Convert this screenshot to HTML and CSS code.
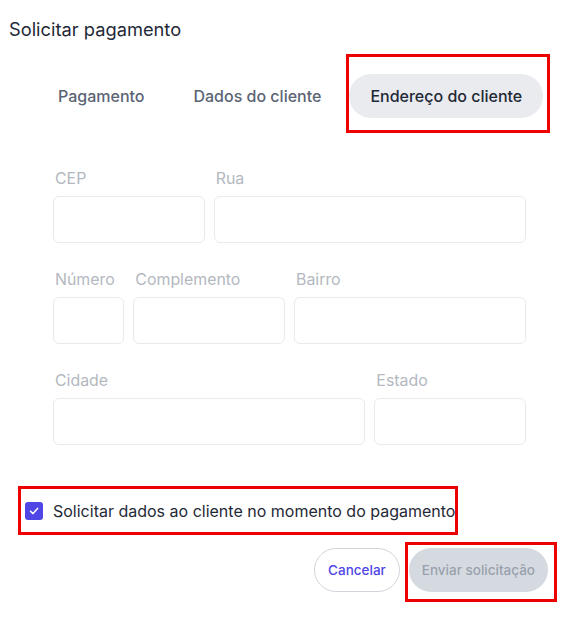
FILE: index.html
```html
<!DOCTYPE html>
<html lang="pt-BR">
<head>
    <meta charset="UTF-8">
    <meta name="viewport" content="width=device-width, initial-scale=1.0">
    <title>Solicitar pagamento</title>
    <link rel="stylesheet" href="styles.css">
</head>
<body>
    <div class="dialog">
        <h1>Solicitar pagamento</h1>

        <div class="tabs">
            <button class="tab">Pagamento</button>
            <button class="tab">Dados do cliente</button>
            <button class="tab active">Endereço do cliente</button>
        </div>

        <form class="address">
            <div class="field span-2">
                <label>CEP</label>
                <input type="text" disabled>
            </div>
            <div class="field span-4">
                <label>Rua</label>
                <input type="text" disabled>
            </div>
            <div class="field span-1">
                <label>Número</label>
                <input type="text" disabled>
            </div>
            <div class="field span-2">
                <label>Complemento</label>
                <input type="text" disabled>
            </div>
            <div class="field span-3">
                <label>Bairro</label>
                <input type="text" disabled>
            </div>
            <div class="field span-4">
                <label>Cidade</label>
                <input type="text" disabled>
            </div>
            <div class="field span-2">
                <label>Estado</label>
                <input type="text" disabled>
            </div>
        </form>

        <label class="ask">
            <span class="box">
                <svg width="12" height="12" viewBox="0 0 12 12"><path d="M2.5 6.2 L5 8.6 L9.6 3.4" fill="none" stroke="#fff" stroke-width="1.5" stroke-linecap="round" stroke-linejoin="round"/></svg>
            </span>
            Solicitar dados ao cliente no momento do pagamento
        </label>

        <div class="actions">
            <button class="btn cancel">Cancelar</button>
            <button class="btn send" disabled>Enviar solicitação</button>
        </div>

        <!-- annotation boxes -->
        <div class="mark mark-tab"></div>
        <div class="mark mark-ask"></div>
        <div class="mark mark-send"></div>
    </div>
</body>
</html>
```

FILE: styles.css
```css
body {
    margin: 0;
    font-family: Inter, "Noto Sans", sans-serif;
    color: #1f2937;
    background: #fff;
}
.dialog {
    position: relative;
    width: 569px;
    height: 619px;
}
h1 {
    margin: 0;
    padding: 18px 0 0 9px;
    font-size: 18.3px;
    font-weight: 400;
    line-height: 22px;
    color: #1f2937;
}
.tabs {
    display: flex;
    gap: 7px;
    margin-top: 34px;
    padding-left: 37px;
}
.tab {
    font-family: inherit;
    font-size: 16px;
    font-weight: 500;
    height: 44px;
    padding: 0 21px;
    border: none;
    border-radius: 22px;
    background: none;
    color: #5b6474;
}
.tab.active {
    background: #e9ebee;
    color: #1f2937;
}
.address {
    display: grid;
    grid-template-columns: repeat(6, minmax(0, 1fr));
    column-gap: 9px;
    row-gap: 27px;
    margin: 51px 43px 0 53px;
}
.field {
    display: flex;
    flex-direction: column;
    gap: 7px;
    min-width: 0;
}
.span-1 { grid-column: span 1; }
.span-2 { grid-column: span 2; }
.span-3 { grid-column: span 3; }
.span-4 { grid-column: span 4; }
.field label {
    font-size: 15.9px;
    line-height: 20px;
    color: #b4b8bf;
    margin-left: 2px;
}
.field input {
    width: 100%;
    min-width: 0;
    height: 47px;
    box-sizing: border-box;
    border: 1px solid #e8eaee;
    border-radius: 6px;
    background: #fff;
}
.ask {
    display: flex;
    align-items: center;
    gap: 10px;
    margin: 55px 0 0 25px;
    font-size: 16px;
    line-height: 22px;
    color: #1f2937;
}
.box {
    width: 18px;
    height: 18px;
    border-radius: 3px;
    background: #5046e5;
    display: flex;
    align-items: center;
    justify-content: center;
}
.actions {
    display: flex;
    justify-content: flex-end;
    gap: 9px;
    margin: 26px 21px 0 0;
}
.btn {
    font-family: inherit;
    font-size: 13.5px;
    font-weight: 500;
    height: 44px;
    border-radius: 22px;
}
.cancel {
    padding: 0 13px;
    background: #fff;
    border: 1px solid #d1d5db;
    color: #4f46e5;
}
.send {
    padding: 0 13px;
    background: #d5dae1;
    border: none;
    color: #9aa1ad;
}
.mark {
    position: absolute;
    border: 3px solid #ee0000;
    box-sizing: border-box;
}
.mark-tab { left: 346px; top: 54px; width: 204px; height: 79px; }
.mark-ask { left: 18px; top: 486px; width: 440px; height: 49px; }
.mark-send { left: 405px; top: 542px; width: 152px; height: 60px; }
```
